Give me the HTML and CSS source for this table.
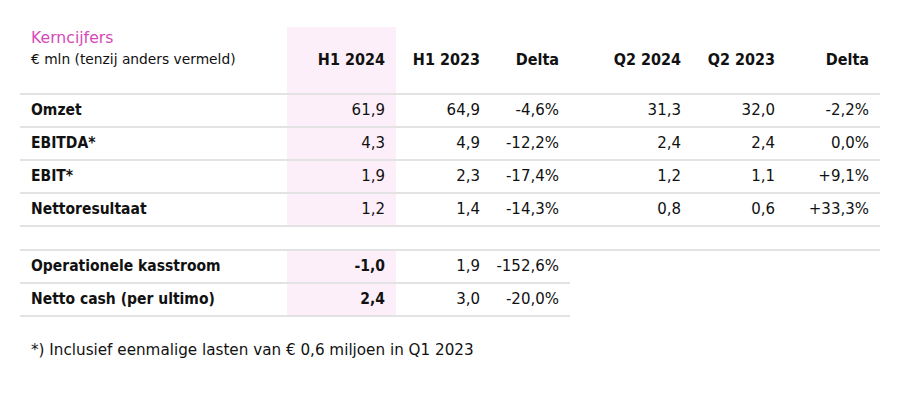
FILE: index.html
```html
<!DOCTYPE html>
<html lang="nl">
<head>
<meta charset="utf-8">
<title>Kerncijfers</title>
<link rel="stylesheet" href="styles.css">
</head>
<body>
<div class="wrap">
  <table class="kc">
    <colgroup>
      <col class="c-label"><col class="c-h1a"><col class="c-h1b"><col class="c-d1"><col class="c-q2a"><col class="c-q2b"><col class="c-d2">
    </colgroup>
    <thead>
      <tr>
        <th class="label head-title"><span class="title">Kerncijfers</span><span class="sub">€ mln (tenzij anders vermeld)</span></th>
        <th class="num hl">H1 2024</th>
        <th class="num">H1 2023</th>
        <th class="num">Delta</th>
        <th class="num">Q2 2024</th>
        <th class="num">Q2 2023</th>
        <th class="num">Delta</th>
      </tr>
    </thead>
    <tbody>
      <tr><td class="label">Omzet</td><td class="num hl">61,9</td><td class="num">64,9</td><td class="num">-4,6%</td><td class="num">31,3</td><td class="num">32,0</td><td class="num">-2,2%</td></tr>
      <tr><td class="label">EBITDA*</td><td class="num hl">4,3</td><td class="num">4,9</td><td class="num">-12,2%</td><td class="num">2,4</td><td class="num">2,4</td><td class="num">0,0%</td></tr>
      <tr><td class="label">EBIT*</td><td class="num hl">1,9</td><td class="num">2,3</td><td class="num">-17,4%</td><td class="num">1,2</td><td class="num">1,1</td><td class="num">+9,1%</td></tr>
      <tr><td class="label">Nettoresultaat</td><td class="num hl">1,2</td><td class="num">1,4</td><td class="num">-14,3%</td><td class="num">0,8</td><td class="num">0,6</td><td class="num">+33,3%</td></tr>
      <tr class="spacer"><td colspan="7"></td></tr>
      <tr class="short"><td class="label">Operationele kasstroom</td><td class="num hl strong">-1,0</td><td class="num">1,9</td><td class="num">-152,6%</td><td class="empty"></td><td class="empty"></td><td class="empty"></td></tr>
      <tr class="short"><td class="label">Netto cash (per ultimo)</td><td class="num hl strong">2,4</td><td class="num">3,0</td><td class="num">-20,0%</td><td class="empty"></td><td class="empty"></td><td class="empty"></td></tr>
    </tbody>
  </table>
  <p class="note">*) Inclusief eenmalige lasten van € 0,6 miljoen in Q1 2023</p>
</div>
</body>
</html>
```

FILE: styles.css
```css
html, body {
  margin: 0;
  padding: 0;
  background: #ffffff;
}

body {
  font-family: "DejaVu Sans", sans-serif;
  font-size: 15px;
  color: #111111;
}

.wrap {
  padding: 27px 0 0 20px;
}

.kc {
  border-collapse: collapse;
  table-layout: fixed;
  width: 860px;
}

.c-label { width: 267px; }
.c-h1a { width: 109px; }
.c-h1b { width: 95px; }
.c-d1 { width: 79px; }
.c-q2a { width: 122px; }
.c-q2b { width: 94px; }
.c-d2 { width: 94px; }

.kc th,
.kc td {
  padding: 0;
  line-height: 21px;
  white-space: nowrap;
}

.kc thead th {
  height: 67px;
  vertical-align: top;
  padding-top: 22px;
  font-family: "DejaVu Sans Condensed", "DejaVu Sans", sans-serif;
  font-size: 16px;
  font-weight: bold;
  border-bottom: 2px solid #e3e3e3;
  box-sizing: border-box;
}

.kc thead th.head-title {
  padding-top: 0;
  font-family: "DejaVu Sans", sans-serif;
  font-weight: normal;
}

.title {
  display: block;
  font-size: 15.7px;
  line-height: 21px;
  color: #d64ab8;
}

.sub {
  display: block;
  font-size: 13.8px;
  line-height: 22px;
}

.kc tbody td {
  height: 33px;
  vertical-align: middle;
  padding-bottom: 1px;
  box-sizing: border-box;
  border-bottom: 2px solid #e3e3e3;
}

.label {
  text-align: left;
  padding-left: 11px !important;
}

.kc tbody td.label,
.strong {
  font-family: "DejaVu Sans Condensed", "DejaVu Sans", sans-serif;
  font-size: 15.5px;
  font-weight: bold;
}

.num {
  text-align: right;
  padding-right: 11px !important;
}

.hl {
  background: #fdeff9;
}

.kc tbody tr.spacer td {
  height: 24px;
  padding: 0;
  background: #ffffff;
}

.kc tbody td.empty {
  border-bottom: none;
}

.note {
  margin: 23px 0 0 11px;
  font-size: 15.2px;
  line-height: 21px;
}
```
